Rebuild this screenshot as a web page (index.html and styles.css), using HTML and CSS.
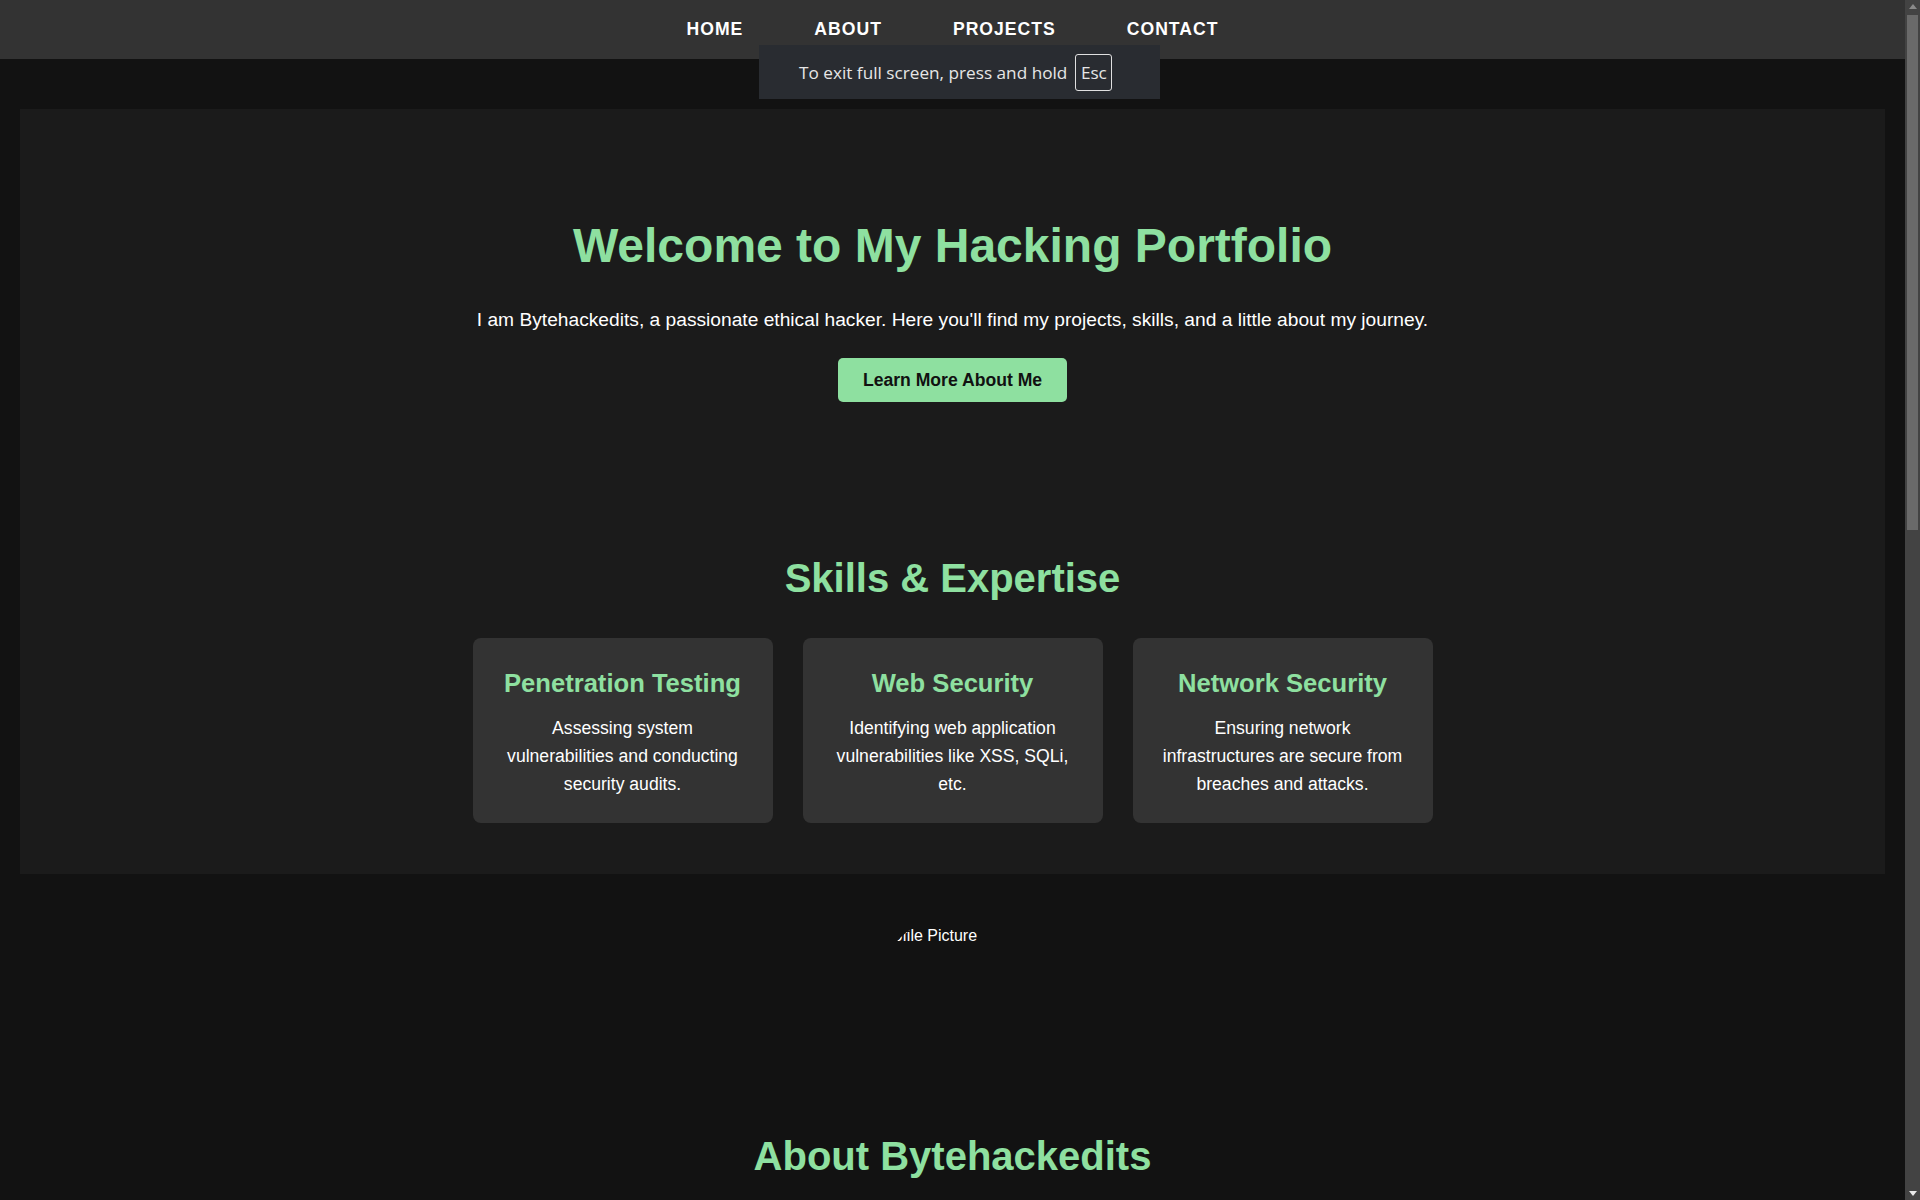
FILE: index.html
```html
<!DOCTYPE html>
<html lang="en">
<head>
<meta charset="utf-8">
<title>Bytehackedits | Hacking Portfolio</title>
<link rel="stylesheet" href="styles.css">
</head>
<body>
<header class="site-header">
  <nav class="nav">
    <a href="#home" class="nav-link">Home</a>
    <a href="#about" class="nav-link">About</a>
    <a href="#projects" class="nav-link">Projects</a>
    <a href="#contact" class="nav-link">Contact</a>
  </nav>
</header>

<div class="fs-toast">
  <span class="fs-text">To exit full screen, press and hold</span>
  <span class="fs-key">Esc</span>
</div>

<div class="scrollbar" aria-hidden="true">
  <span class="sb-arrow sb-up"></span>
  <div class="sb-track">
    <div class="sb-thumb"></div>
  </div>
  <span class="sb-arrow sb-down"></span>
</div>

<main>
  <section class="panel" id="home">
    <div class="hero">
      <h1 class="hero-title">Welcome to My Hacking Portfolio</h1>
      <p class="hero-text">I am Bytehackedits, a passionate ethical hacker. Here you'll find my projects, skills, and a little about my journey.</p>
      <a class="btn" href="#about">Learn More About Me</a>
    </div>
    <div class="skills">
      <h2 class="section-title">Skills &amp; Expertise</h2>
      <div class="skill-grid">
        <div class="skill-card">
          <h3 class="card-title">Penetration Testing</h3>
          <p class="card-text">Assessing system vulnerabilities and conducting security audits.</p>
        </div>
        <div class="skill-card">
          <h3 class="card-title">Web Security</h3>
          <p class="card-text">Identifying web application vulnerabilities like XSS, SQLi, etc.</p>
        </div>
        <div class="skill-card">
          <h3 class="card-title">Network Security</h3>
          <p class="card-text">Ensuring network infrastructures are secure from breaches and attacks.</p>
        </div>
      </div>
    </div>
  </section>

  <section class="profile">
    <div class="avatar"><span class="avatar-alt">Profile Picture</span></div>
  </section>

  <section class="about" id="about">
    <h2 class="section-title">About Bytehackedits</h2>
    <p class="about-text">I'm a cybersecurity enthusiast focused on ethical hacking, CTF challenges and responsible disclosure. I enjoy breaking things to learn how to build them more securely.</p>
  </section>

  <section class="projects" id="projects">
    <h2 class="section-title">Projects</h2>
    <div class="skill-grid">
      <div class="skill-card">
        <h3 class="card-title">Recon Toolkit</h3>
        <p class="card-text">Automated reconnaissance scripts for subdomain and port discovery.</p>
      </div>
      <div class="skill-card">
        <h3 class="card-title">CTF Writeups</h3>
        <p class="card-text">Detailed walkthroughs of capture-the-flag challenges I have solved.</p>
      </div>
      <div class="skill-card">
        <h3 class="card-title">Vuln Scanner</h3>
        <p class="card-text">A lightweight scanner for common web application misconfigurations.</p>
      </div>
    </div>
  </section>

  <section class="contact" id="contact">
    <h2 class="section-title">Contact</h2>
    <form class="contact-form">
      <input class="field" type="text" placeholder="Your Name">
      <input class="field" type="email" placeholder="Your Email">
      <textarea class="field area" placeholder="Your Message"></textarea>
      <button class="btn" type="button">Send Message</button>
    </form>
  </section>
</main>

<footer class="site-footer">
  <p>&copy; 2024 Bytehackedits. All rights reserved.</p>
</footer>
</body>
</html>
```

FILE: styles.css
```css
:root {
  color-scheme: dark;
}

* {
  box-sizing: border-box;
}

body {
  margin: 0 15px 0 0;
  background: #121212;
  color: #fff;
  font-family: "Liberation Sans", Arial, sans-serif;
  font-size: 16px;
  line-height: 1.6;
}

/* Header / nav */
.site-header {
  height: 59px;
  padding-bottom: 2px;
  background: #333333;
  display: flex;
  align-items: center;
  justify-content: center;
}

.nav {
  display: flex;
  gap: 71px;
}

.nav-link {
  color: #fff;
  text-decoration: none;
  text-transform: uppercase;
  font-weight: 700;
  font-size: 17.6px;
  letter-spacing: 1px;
  line-height: 20px;
}

/* Fullscreen toast overlay */
.fs-toast {
  position: fixed;
  top: 45px;
  left: 759px;
  width: 401px;
  height: 54px;
  background: #292c31;
  display: flex;
  align-items: center;
  gap: 8px;
  padding-left: 40px;
  font-family: "Open Sans", "DejaVu Sans", sans-serif;
  font-size: 17.2px;
  color: #e6e6e6;
  line-height: normal;
  z-index: 10;
}

.fs-key {
  width: 37px;
  height: 37px;
  border: 1px solid #e0e0e0;
  border-radius: 3px;
  display: flex;
  align-items: center;
  justify-content: center;
}

/* Fake window scrollbar (overlay) */
.scrollbar {
  position: fixed;
  top: 0;
  right: 0;
  width: 15px;
  height: 1200px;
  background: #434343;
  display: flex;
  flex-direction: column;
  align-items: center;
  z-index: 20;
}

.sb-arrow {
  width: 0;
  height: 0;
  border-left: 4px solid transparent;
  border-right: 4px solid transparent;
}

.sb-up {
  margin-top: 4px;
  border-bottom: 5px solid #8a8a8a;
}

.sb-down {
  margin-bottom: 4px;
  border-top: 5px solid #e8e8e8;
}

.sb-track {
  flex: 1;
  width: 100%;
  padding: 6px 2px 0;
}

.sb-thumb {
  height: 515px;
  background: #6a6a6a;
}

/* Main panel */
.panel {
  margin: 50px 20px 0;
  background: #1b1b1b;
  padding: 108px 20px 51px;
}

.hero {
  display: flex;
  flex-direction: column;
  align-items: center;
  text-align: center;
}

.hero-title {
  margin: 0;
  font-size: 48px;
  line-height: 1.2;
  color: #8ee0a0;
}

.hero-text {
  margin: 30px 0 0;
  font-size: 19.2px;
  line-height: 1.6;
}

.btn {
  display: block;
  margin-top: 23px;
  padding: 12px 25px;
  background: #8ee0a0;
  color: #111;
  font-family: "Liberation Sans", Arial, sans-serif;
  font-weight: 700;
  font-size: 17.6px;
  line-height: 20px;
  text-decoration: none;
  border: none;
  border-radius: 5px;
}

.skills {
  margin-top: 152px;
  text-align: center;
}

.section-title {
  margin: 0;
  font-size: 40px;
  line-height: 1.2;
  color: #8ee0a0;
  text-align: center;
}

.skill-grid {
  margin-top: 36px;
  display: grid;
  grid-template-columns: repeat(3, 300px);
  gap: 30px;
  justify-content: center;
}

.skill-card {
  background: #333333;
  border-radius: 8px;
  padding: 30px 25px 25px;
  text-align: center;
}

.card-title {
  margin: 0;
  font-size: 25.6px;
  line-height: 1.2;
  color: #8ee0a0;
}

.card-text {
  margin: 15px 0 0;
  font-size: 17.6px;
  line-height: 1.6;
  color: #fff;
}

/* Profile picture (broken image look) */
.profile {
  padding-top: 42px;
  display: flex;
  justify-content: center;
}

.avatar {
  width: 150px;
  height: 150px;
  border-radius: 50%;
  overflow: hidden;
  padding-top: 11px;
}

.avatar-alt {
  display: block;
  white-space: nowrap;
  font-size: 16px;
  line-height: 18px;
  color: #fff;
}

/* About */
.about {
  padding: 66px 20px 0;
  text-align: center;
}

.about-text {
  max-width: 800px;
  margin: 24px auto 0;
  font-size: 17.6px;
}

.projects {
  padding: 100px 20px 0;
}

.contact {
  padding: 100px 20px 0;
}

.contact-form {
  width: 500px;
  margin: 36px auto 0;
  display: flex;
  flex-direction: column;
  align-items: center;
  gap: 14px;
}

.field {
  width: 100%;
  padding: 12px;
  background: #333;
  color: #fff;
  border: none;
  border-radius: 5px;
  font: inherit;
}

.area {
  height: 140px;
  resize: none;
}

.site-footer {
  margin-top: 100px;
  background: #333;
  text-align: center;
  padding: 18px 0;
  font-size: 15px;
}

.site-footer p {
  margin: 0;
}
```
